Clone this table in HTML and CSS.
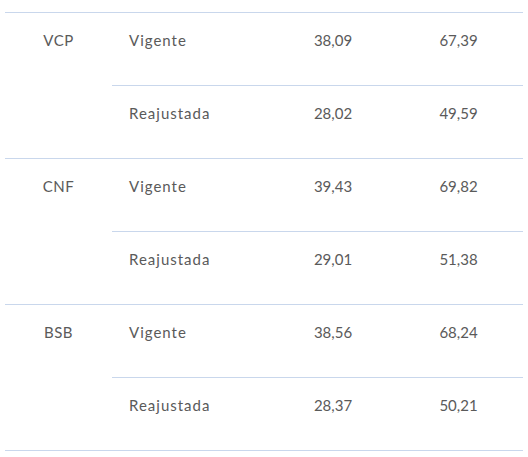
FILE: index.html
```html
<!DOCTYPE html>
<html>
<head>
<meta charset="utf-8">
<link rel="stylesheet" href="styles.css">
</head>
<body>
<div class="table">
  <div class="group">
    <div class="code">VCP</div>
    <div class="rows">
      <div class="row"><div class="type">Vigente</div><div class="num">38,09</div><div class="num num2">67,39</div></div>
      <div class="row"><div class="type">Reajustada</div><div class="num">28,02</div><div class="num num2">49,59</div></div>
    </div>
  </div>
  <div class="group">
    <div class="code">CNF</div>
    <div class="rows">
      <div class="row"><div class="type">Vigente</div><div class="num">39,43</div><div class="num num2">69,82</div></div>
      <div class="row"><div class="type">Reajustada</div><div class="num">29,01</div><div class="num num2">51,38</div></div>
    </div>
  </div>
  <div class="group">
    <div class="code">BSB</div>
    <div class="rows">
      <div class="row"><div class="type">Vigente</div><div class="num">38,56</div><div class="num num2">68,24</div></div>
      <div class="row"><div class="type">Reajustada</div><div class="num">28,37</div><div class="num num2">50,21</div></div>
    </div>
  </div>
</div>
</body>
</html>
```
FILE: styles.css
```css
html, body {
  margin: 0;
  background: #ffffff;
}
body {
  padding: 12px 5px 0 5px;
  font-family: Lato, "Open Sans", sans-serif;
  font-size: 15px;
  color: #5a5a5a;
}
.table {
  width: 518px;
  border-top: 1px solid #c9d7ec;
}
.group {
  display: flex;
  border-bottom: 1px solid #c9d7ec;
}
.code {
  width: 107px;
  text-align: center;
  padding-top: 15px;
  line-height: 24px;
  box-sizing: border-box;
  letter-spacing: 0.5px;
}
.rows {
  flex: 1;
  display: flex;
  flex-direction: column;
}
.row {
  display: flex;
  height: 72px;
  box-sizing: border-box;
  padding-top: 15px;
  line-height: 24px;
}
.row:first-child {
  height: 73px;
  border-bottom: 1px solid #c9d7ec;
}
.type {
  width: 160px;
  padding-left: 17px;
  box-sizing: border-box;
  letter-spacing: 1px;
}
.num {
  width: 122px;
  text-align: center;
}
.num2 {
  width: 129px;
}
```
